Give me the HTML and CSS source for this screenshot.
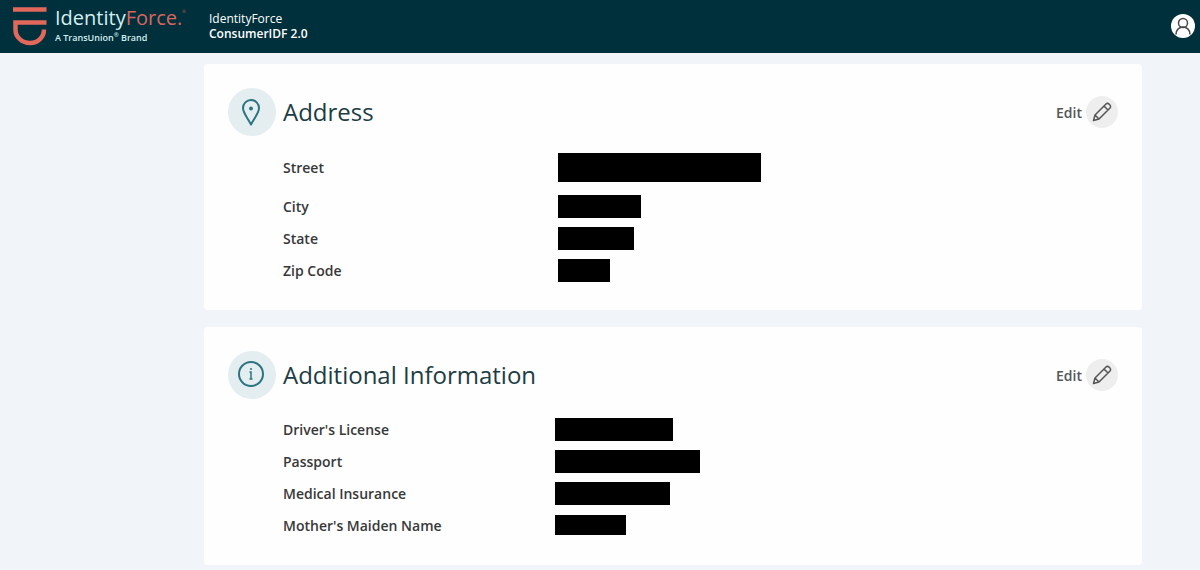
FILE: index.html
```html
<!DOCTYPE html>
<html lang="en">
<head>
    <meta charset="UTF-8">
    <meta name="viewport" content="width=device-width, initial-scale=1.0">
    <title>IdentityForce - Profile</title>
    <link rel="stylesheet" href="styles.css">
</head>
<body>
    <header class="topbar">
        <div class="logo">
            <svg class="logo-mark" width="36" height="42" viewBox="0 0 36 42" fill="none" stroke="#e2685c" stroke-width="4.500" aria-hidden="true">
                <path d="M1 4.500H34.500M34.500 17.500H3.500V25C3.500 32 10 38 18 38S32 32 32 24.500" />
            </svg>
            <div>
                <div class="logo-name">Identity<span class="logo-accent">Force.<sup>®</sup></span></div>
                <div class="logo-tagline">A TransUnion<sup>®</sup> Brand</div>
            </div>
        </div>
        <div class="account">
            <div>IdentityForce</div>
            <div class="account-plan">ConsumerIDF 2.0</div>
        </div>
        <button class="user-btn" type="button" aria-label="Account">
            <svg width="24" height="24" viewBox="0 0 24 24" fill="none" stroke="#4a4a4a" stroke-width="1.500">
                <circle cx="12" cy="9" r="4.500" />
                <path d="M5 20.500C5 10.500 19 10.500 19 20.500" />
            </svg>
        </button>
    </header>

    <main class="content">
        <section class="card">
            <div class="card-header">
                <span class="card-icon">
                    <svg width="28" height="30" viewBox="0 0 28 30" fill="none" stroke="#2c7480" stroke-width="2" stroke-linejoin="round">
                        <path d="M13 27.500C10 21.500 5 16 5 11A8 8 0 0 1 21 11C21 16 16 21.500 13 27.500Z" />
                        <circle cx="13" cy="11.500" r="2" fill="#2c7480" stroke="none" />
                    </svg>
                </span>
                <h2>Address</h2>
                <button class="edit-btn" type="button">
                    Edit
                    <span class="edit-icon">
                        <svg width="20" height="20" viewBox="0 0 20 20" fill="none" stroke="#555" stroke-width="1.500" stroke-linejoin="round">
                            <path d="M1.500 18.500L3 13L14 2C16 0 20 4 18 6L7 17ZM12 4L16 8M3 13L7 17" />
                        </svg>
                    </span>
                </button>
            </div>
            <dl class="fields fields-address">
                <div class="field"><dt>Street</dt><dd><span class="redacted redacted-tall" style="width: 203px"></span></dd></div>
                <div class="field"><dt>City</dt><dd><span class="redacted" style="width: 83px"></span></dd></div>
                <div class="field"><dt>State</dt><dd><span class="redacted" style="width: 76px"></span></dd></div>
                <div class="field"><dt>Zip Code</dt><dd><span class="redacted" style="width: 52px"></span></dd></div>
            </dl>
        </section>

        <section class="card">
            <div class="card-header">
                <span class="card-icon">
                    <svg width="28" height="28" viewBox="0 0 28 28" fill="none" stroke="#2c7480" stroke-width="2">
                        <circle cx="13" cy="13" r="12" />
                        <path d="M11.500 11H13V18M11.500 18H14.500" stroke-width="1.500" />
                        <circle cx="13" cy="8" r="1" fill="#2c7480" stroke="none" />
                    </svg>
                </span>
                <h2>Additional Information</h2>
                <button class="edit-btn" type="button">
                    Edit
                    <span class="edit-icon">
                        <svg width="20" height="20" viewBox="0 0 20 20" fill="none" stroke="#555" stroke-width="1.500" stroke-linejoin="round">
                            <path d="M1.500 18.500L3 13L14 2C16 0 20 4 18 6L7 17ZM12 4L16 8M3 13L7 17" />
                        </svg>
                    </span>
                </button>
            </div>
            <dl class="fields">
                <div class="field"><dt>Driver's License</dt><dd><span class="redacted" style="width: 118px"></span></dd></div>
                <div class="field"><dt>Passport</dt><dd><span class="redacted" style="width: 145px"></span></dd></div>
                <div class="field"><dt>Medical Insurance</dt><dd><span class="redacted" style="width: 115px"></span></dd></div>
                <div class="field"><dt>Mother's Maiden Name</dt><dd><span class="redacted redacted-short" style="width: 71px"></span></dd></div>
            </dl>
        </section>
    </main>
</body>
</html>
```
FILE: styles.css
```css
* {
    box-sizing: border-box;
}
body {
    margin: 0;
    background: #f1f4f8;
    color: #383838;
    font-family: "Open Sans", "Noto Sans", sans-serif;
    font-size: 14px;
}
button {
    border: none;
    padding: 0;
    font: inherit;
    cursor: pointer;
}

/* Top bar */
.topbar {
    display: flex;
    align-items: center;
    height: 53px;
    padding: 0 5px 2px 12px;
    background: #00303c;
    color: #fff;
}
.logo {
    display: flex;
    align-items: center;
    gap: 7px;
    width: 197px;
}
.logo-mark {
    flex: none;
}
.logo-name {
    color: #d6eef0;
    font-size: 20px;
    line-height: 24px;
}
.logo-accent {
    color: #d9665e;
}
.logo-name sup {
    font-size: 4px;
    line-height: 1;
    vertical-align: 12px;
}
.logo-tagline {
    color: #d6eef0;
    font-size: 9px;
    font-weight: 600;
    line-height: 16px;
}
.logo-tagline sup {
    font-size: 6px;
    line-height: 1;
}
.account {
    font-size: 12px;
    line-height: 15px;
}
.account-plan {
    font-weight: 600;
}
.user-btn {
    display: flex;
    margin-left: auto;
    border-radius: 50%;
    background: #fff;
}

/* Cards */
.content {
    display: grid;
    gap: 17px;
    padding: 11px 58px 5px 204px;
}
.card {
    padding: 24px;
    border-radius: 4px;
    background: #fefefe;
}
.card-header {
    display: flex;
    align-items: center;
}
.card-icon {
    display: flex;
    align-items: center;
    justify-content: center;
    width: 48px;
    height: 48px;
    border-radius: 50%;
    background: #e4eef1;
}
h2 {
    margin: 0 0 0 7px;
    color: #203c44;
    font-size: 24px;
    font-weight: 400;
    line-height: 32px;
}
.edit-btn {
    display: flex;
    align-items: center;
    gap: 4px;
    margin-left: auto;
    background: none;
    color: #555;
    font-weight: 600;
}
.edit-icon {
    display: flex;
    align-items: center;
    justify-content: center;
    width: 32px;
    height: 32px;
    border-radius: 50%;
    background: #eee;
}

/* Field rows */
.fields {
    margin: 0;
    padding: 14px 0 0 55px;
}
.field {
    display: grid;
    grid-template-columns: 272px 1fr;
    align-items: center;
    height: 32px;
}
.fields-address {
    padding-top: 15px;
}
.fields-address .field {
    grid-template-columns: 275px 1fr;
}
.fields-address .field:first-child {
    margin-bottom: 7px;
}
dt {
    font-weight: 600;
}
dd {
    margin: 0;
}
.redacted {
    display: block;
    height: 23px;
    background: #000;
}
.redacted-tall {
    height: 29px;
}
.redacted-short {
    height: 20px;
}
```
